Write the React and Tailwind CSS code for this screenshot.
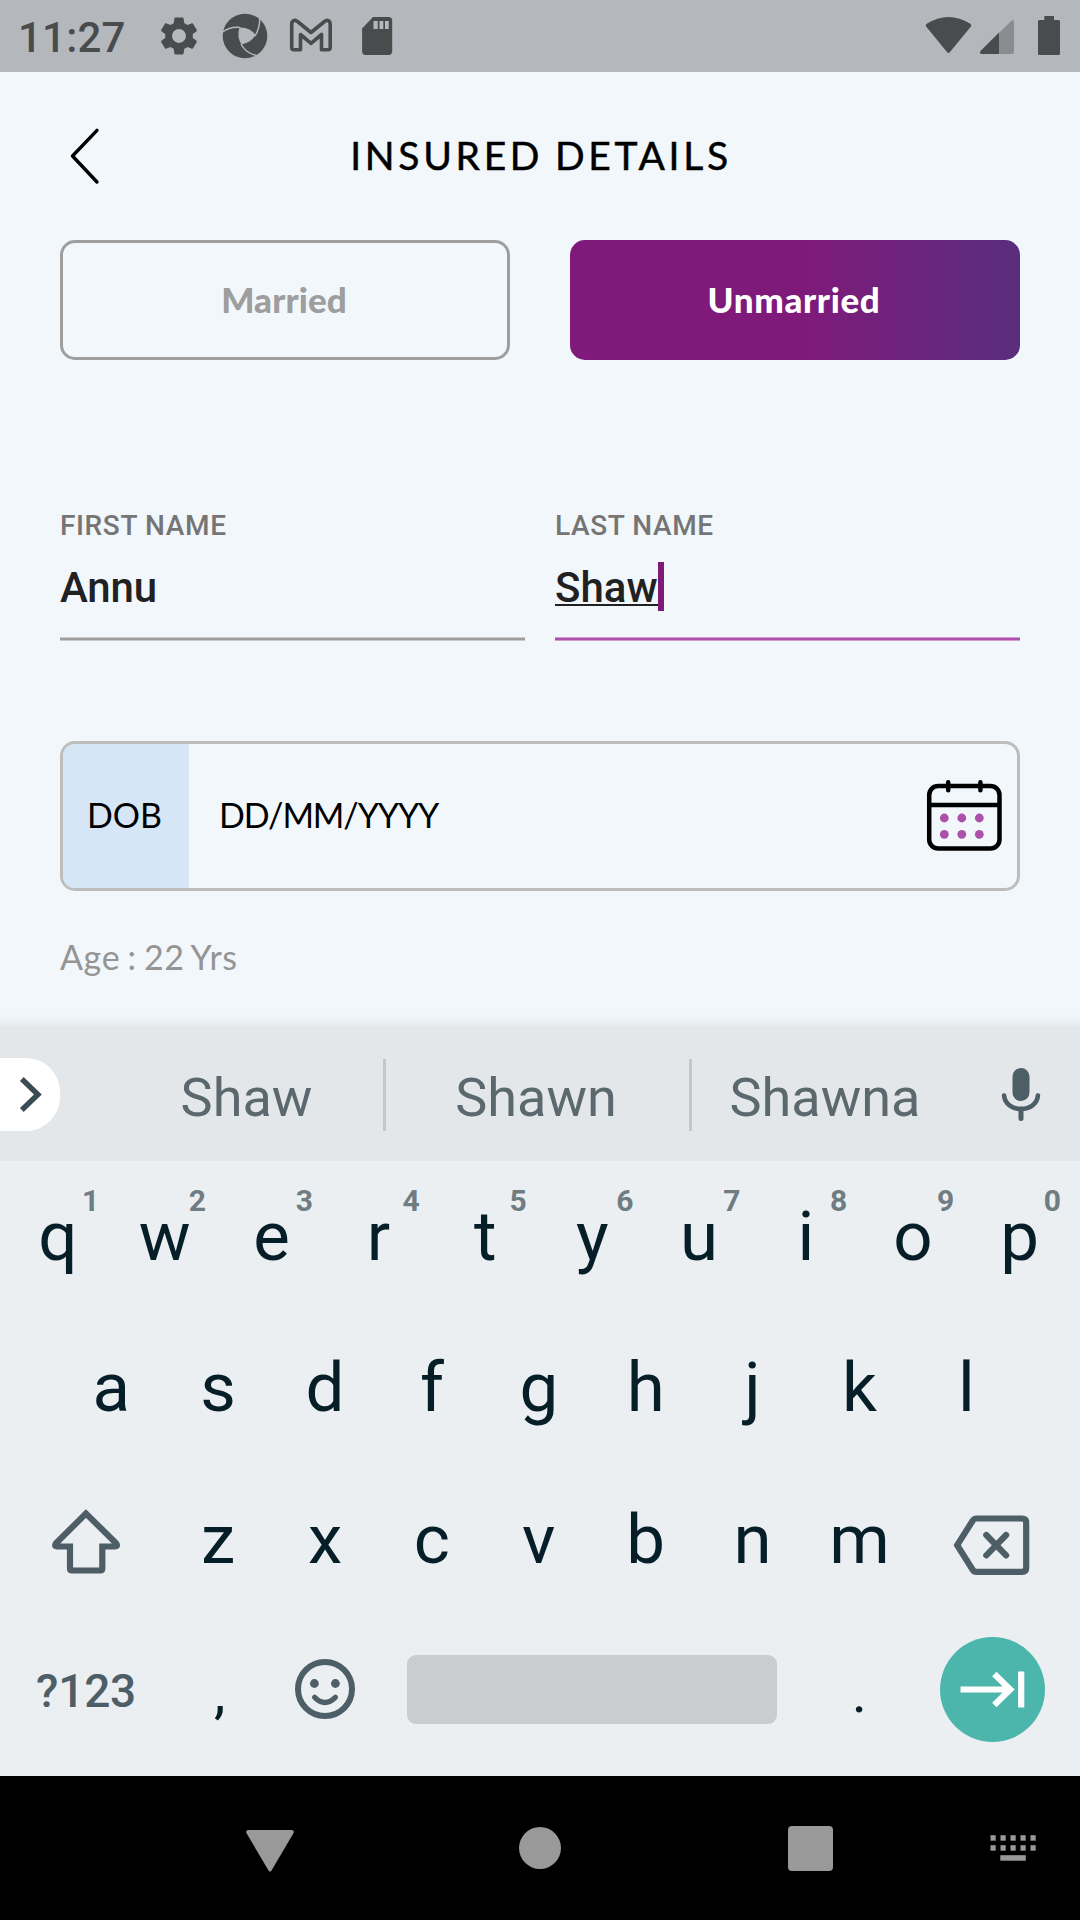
import React from "react";
import { MdSettings } from "react-icons/md";

const DARK = "#4a4b4c";
const KEY = "#4d5e66";

function StatusBar() {
  return (
    <header className="flex h-[72px] items-center bg-[#b4b7bc] text-[#4a4b4c]">
      <span className="ml-[18px] w-[110px] pt-[3px] text-[42px] leading-[50px] font-medium tracking-[0.2px] whitespace-nowrap">11:27</span>
      <MdSettings className="ml-[28px] size-[46px]" />
      <svg className="ml-[19px]" width="48" height="48" viewBox="221 12 48 48">
        <circle cx="245" cy="36" r="22.3" fill={DARK} />
        <path d="M239.5 27.5Q250 27 255.5 35Q252 42 241.5 44.5Q236.500 37 239.5 27.500Z" fill="#b4b7bc" />
        <path d="M222 32.500Q230 26.500 240 27.500M259.500 17Q260.500 27 255 36M241 44Q246 54 259 56" fill="none" stroke="#b4b7bc" strokeWidth="1.5" />
      </svg>
      <svg className="ml-[19px]" width="46" height="36" viewBox="288 18 46 36">
        <path d="M294 49.700H300.500V34.500L311 43.300L321.500 34.500V49.700H328Q330.200 49.700 330.200 47.500V24.500C330.200 20.500 327 19.300 324.500 21.500L311 32.500L297.500 21.500C295 19.300 291.700 20.500 291.700 24.500V47.500Q291.700 49.700 294 49.700Z" fill="none" stroke={DARK} strokeWidth="3.600" strokeLinejoin="round" />
      </svg>
      <svg className="ml-[27px]" width="32" height="40" viewBox="361 16 32 40">
        <path d="M373 17H388.500Q392.200 17 392.200 20.700V51.200Q392.200 54.900 388.500 54.900H365.800Q362.100 54.900 362.100 51.200V28.500Z" fill={DARK} />
        <path d="M373.500 21H377.700V29H373.500ZM379.500 21H383.300V29H379.500ZM385 21H388.700V29H385Z" fill="#b4b7bc" />
      </svg>
      <svg className="ml-auto" width="48" height="40" viewBox="925 16 48 40">
        <path d="M926.300 26.700Q925 25 926.700 23.800Q948.500 10.200 970.300 23.800Q972 25 970.700 26.700L949.800 52.300Q948.500 53.700 947.200 52.300Z" fill={DARK} />
      </svg>
      <svg className="ml-[6px]" width="36" height="40" viewBox="979 16 36 40">
        <path d="M999 33L1011.700 20.500Q1014 19 1014 21.700V51.800Q1014 54 1011.800 54H999Z" fill="#8a8d8f" />
        <path d="M999 32.500V54H981.500Q979 53.500 980.500 51Z" fill={DARK} />
      </svg>
      <svg className="mr-[19px] ml-[22px]" width="24" height="40" viewBox="1037 16 24 40">
        <path d="M1044.300 16H1054V20H1058.500Q1060 20 1060 21.500V53.500Q1060 55 1058.500 55H1039.500Q1038 55 1038 53.500V21.500Q1038 20 1039.500 20H1044.300Z" fill={DARK} />
      </svg>
    </header>
  );
}

function TitleBar() {
  return (
    <div className="grid h-[168px] grid-cols-[60px_1fr_60px] items-center px-[60px]">
      <svg width="40" height="60" viewBox="60 126 40 60">
        <path d="M97 130.300L72.500 156L97 182" fill="none" stroke="#000" strokeWidth="3.400" strokeLinecap="round" strokeLinejoin="round" />
      </svg>
      <h1 className="pb-[2px] pl-[2px] text-center font-[Lato,sans-serif] text-[39px] leading-[50px] tracking-[3.7px] whitespace-nowrap text-black [-webkit-text-stroke:0.5px_#000] [word-spacing:-2px]">INSURED DETAILS</h1>
    </div>
  );
}

function Form() {
  return (
    <main className="h-[954px] bg-[#f2f7fb]">
      <TitleBar />
      <div className="grid grid-cols-2 gap-[60px] px-[60px] font-[Lato,sans-serif] text-[35px] font-black">
        <button className="h-[120px] rounded-[15px] border-[3px] border-[#9e9e9e] pr-[2px] pb-[2px] tracking-[0.1px] text-[#9e9e9e]">Married</button>
        <button className="h-[120px] rounded-[15px] bg-[linear-gradient(90deg,#7f1a7b_0%,#7f1a7b_52%,#592e7c_100%)] pr-[2px] pb-[2px] tracking-[0.65px] text-white">Unmarried</button>
      </div>
      <div className="mt-[150px] grid grid-cols-2 gap-[30px] px-[60px]">
        <div>
          <div className="text-[28px] leading-[32px] font-medium tracking-[0.63px] text-[#757575]">FIRST NAME</div>
          <div className="mt-[20px] flex h-[49px] items-center pt-[2px] text-[42px] font-medium tracking-[-0.2px] text-[#212121]">Annu</div>
          <div className="mt-[26px] h-[4px] border-y border-[#c8cacc] bg-[#9e9e9e]" />
        </div>
        <div>
          <div className="text-[28px] leading-[32px] font-medium tracking-[0.6px] text-[#757575]">LAST NAME</div>
          <div className="mt-[20px] flex h-[49px]">
            <span className="relative flex h-[49px] items-center pt-[2px] text-[42px] font-medium text-[#212121]">
              Shaw
              <span className="absolute top-[42px] left-0 h-[2px] w-full bg-[#212121]" />
            </span>
            <span className="h-[49px] w-[6px] bg-[#7f1a7b]" />
          </div>
          <div className="mt-[26px] h-[4px] border-y border-[#cf9bd0] bg-[#ad50a9]" />
        </div>
      </div>
      <div className="mx-[60px] mt-[100px] flex h-[150px] overflow-hidden rounded-[15px] border-[3px] border-[#bdbdbd] font-[Lato,sans-serif] text-[34px] text-black">
        <div className="flex w-[126px] items-center bg-[#d6e6f6] pb-[3px] pl-[24px]">DOB</div>
        <div className="flex flex-1 items-center pb-[3px] pl-[30px] tracking-[-1.1px]">DD/MM/YYYY</div>
        <svg className="mt-[34px] mr-[14px]" width="78" height="74" viewBox="925 778 78 74">
          <rect x="929.200" y="786" width="70.300" height="62.500" rx="9" fill="none" stroke="#000" strokeWidth="4.500" />
          <path d="M929 805H999.500" stroke="#000" strokeWidth="4.500" />
          <path d="M948.200 782.300V790.300M980.400 782.300V790.300" stroke="#000" strokeWidth="4.500" strokeLinecap="round" />
          {[944.3, 961.8, 979.3].map((x) =>
            [818, 834.3].map((y) => <circle key={`${x}-${y}`} cx={x} cy={y} r="4.400" fill="#ad50a9" />)
          )}
        </svg>
      </div>
      <div className="mt-[46px] ml-[60px] font-[Lato,sans-serif] text-[34px] leading-[40px] tracking-[0.6px] text-[#949494] [word-spacing:-2px]">Age : 22 Yrs</div>
      <div className="mt-[35px] h-[14px] bg-linear-to-b from-[#f2f7fb] via-[#eff4f8] to-[#e5eaed]" />
    </main>
  );
}

function Suggestions() {
  return (
    <div className="flex h-[135px] items-center bg-[#e3e7ea] pt-[2px] text-[54px] text-[#5b696f]">
      <div className="h-[73px] w-[60px] rounded-r-[34px] bg-white">
        <svg width="60" height="73" viewBox="0 1058 60 73">
          <path d="M21.800 1079L37.900 1094.500L21.800 1110" fill="none" stroke="#3c4c54" strokeWidth="5.400" />
        </svg>
      </div>
      <span className="ml-[50px] w-[273px] pt-[6px] text-center">Shaw</span>
      <span className="h-[72px] w-[3px] bg-[#c2c7ca]" />
      <span className="w-[303px] pt-[6px] pr-[3px] text-center">Shawn</span>
      <span className="h-[72px] w-[3px] bg-[#c2c7ca]" />
      <span className="w-[266px] pt-[6px] text-center">Shawna</span>
      <svg className="ml-[42px]" width="42" height="56" viewBox="1000.400 1067 42 56">
        <rect x="1012.900" y="1068" width="17" height="33" rx="8.500" fill={KEY} />
        <path d="M1004.500 1095.500C1006 1113.500 1036.800 1113.500 1038.300 1095.500" fill="none" stroke={KEY} strokeWidth="4.600" strokeLinecap="round" />
        <path d="M1021.400 1109V1118.500" stroke={KEY} strokeWidth="5" strokeLinecap="round" />
      </svg>
    </div>
  );
}

function Key({ label, hint }) {
  return (
    <div className="relative col-span-2 flex items-center justify-center text-[69px] leading-[80px]">
      {label}
      {hint && (
        <span className="absolute top-[25px] left-[77.500px] text-[30px] leading-[30px] font-bold text-[#6f7c82]">{hint}</span>
      )}
    </div>
  );
}

const ROW = "grid h-[151.500px] w-[1069px] ml-[4.400px] grid-cols-[repeat(20,53.45px)]";

function Keyboard() {
  return (
    <section className="h-[615px] bg-[#ebeff2] text-[#061e28]">
      <div className={ROW}>
        {"qwertyuiop".split("").map((c, i) => (
          <Key key={c} label={c} hint={String((i + 1) % 10)} />
        ))}
      </div>
      <div className={ROW}>
        <div />
        {"asdfghjkl".split("").map((c) => (
          <Key key={c} label={c} />
        ))}
      </div>
      <div className={ROW}>
        <div className="col-span-3 flex items-center justify-center pt-[4px] pl-[3px]">
          <svg width="70" height="68" viewBox="51.200 1508 70 68">
            <path d="M86.200 1513.500L56.200 1543.300Q54 1546.500 57.500 1546.500H70.200V1568.500Q70.200 1570.500 72.200 1570.500H100.500Q102.500 1570.500 102.500 1568.500V1546.500H115Q118.500 1546.500 116.300 1543.300Z" fill="none" stroke={KEY} strokeWidth="6.200" />
          </svg>
        </div>
        {"zxcvbnm".split("").map((c) => (
          <Key key={c} label={c} />
        ))}
        <div className="col-span-3 flex items-center justify-center pt-[11px] pr-[1px]">
          <svg width="78" height="64" viewBox="953.500 1513 78 64">
            <path d="M957.700 1545.200L973 1521Q974.500 1518.500 977 1518.500H1022.500Q1026.700 1518.500 1026.700 1522.700V1567.700Q1026.700 1571.900 1022.500 1571.900H977Q974.500 1571.900 973 1569.500Z" fill="none" stroke={KEY} strokeWidth="6.200" />
            <path d="M986.800 1535L1006.600 1555.400M1006.600 1535L986.800 1555.400" stroke={KEY} strokeWidth="6.200" strokeLinecap="round" />
          </svg>
        </div>
      </div>
      <div className={ROW}>
        <div className="col-span-3 flex items-center justify-center pl-[3px] text-[46px] font-medium tracking-[-0.200px] text-[#4d5e66]">?123</div>
        <div className="col-span-2 flex items-center justify-center pt-[2px] pl-[3px] text-[58px]">,</div>
        <div className="col-span-2 flex items-center justify-center pb-[4px]">
          <svg width="62" height="62" viewBox="294 1658 62 62">
            <circle cx="325" cy="1689" r="27" fill="none" stroke={KEY} strokeWidth="6" />
            <circle cx="314.400" cy="1683.500" r="4.400" fill={KEY} />
            <circle cx="335.400" cy="1683.500" r="4.400" fill={KEY} />
            <path d="M314.600 1697.300Q325 1707.500 335.400 1697.300" fill="none" stroke={KEY} strokeWidth="5.200" strokeLinecap="round" />
          </svg>
        </div>
        <div className="col-span-8 flex items-center justify-center pb-[3px]">
          <div className="h-[69px] w-[370px] rounded-[9px] bg-[#c9cdd0]" />
        </div>
        <div className="col-span-2 flex items-center justify-center pt-[2px] text-[58px]">.</div>
        <div className="col-span-3 flex items-center justify-center pb-[4px]">
          <svg className="size-[105px] rounded-full bg-[#4db6ac]" viewBox="940.500 1636.500 105 105">
            <path d="M961 1689H1011M994.800 1673.500L1010.700 1689L994.800 1704.500M1021.700 1671V1707" fill="none" stroke="#fff" strokeWidth="6.200" />
          </svg>
        </div>
      </div>
    </section>
  );
}

function NavBar() {
  return (
    <nav className="grid h-[144px] grid-cols-[270px_270px_270px_135px] items-center justify-items-center bg-black pl-[135px]">
      <svg className="mt-[6px]" width="50" height="44" viewBox="0 0 50 44">
        <path d="M3.500 1H46.500Q50 1.500 48.300 4.500L26.500 41.500Q25 43.800 23.500 41.500L1.700 4.500Q0 1.500 3.500 1Z" fill="#999" />
      </svg>
      <div className="size-[42px] rounded-full bg-[#999]" />
      <div className="size-[45px] rounded-[4px] bg-[#999]" />
      <svg width="48" height="28" viewBox="989 1834 48 28">
        {[0, 1, 2, 3, 4].map((i) => (
          <g key={i} fill="#999">
            <rect x={990.5 + i * 10} y="1835.200" width="5.200" height="5.500" />
            <rect x={990.5 + i * 10} y="1845.200" width="5.200" height="5.500" />
          </g>
        ))}
        <rect x="1000.300" y="1855.200" width="25.500" height="5.500" fill="#999" />
      </svg>
    </nav>
  );
}

export default function App() {
  return (
    <div className="h-[1920px] w-[1080px] overflow-hidden font-[Roboto,sans-serif]">
      <StatusBar />
      <Form />
      <Suggestions />
      <Keyboard />
      <NavBar />
    </div>
  );
}
